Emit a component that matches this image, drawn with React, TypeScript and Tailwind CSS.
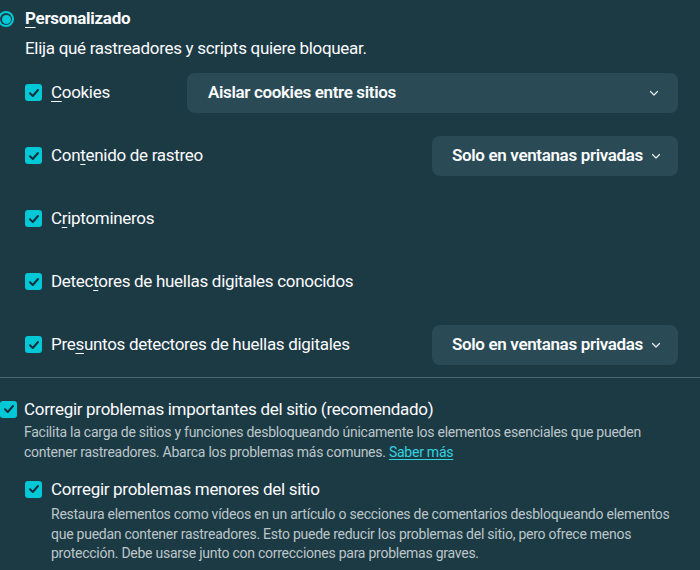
import React from "react";

const Check = ({ className = "" }: { className?: string }) => (
  <span className={`flex h-[17px] w-[17px] shrink-0 items-center justify-center rounded-[3px] bg-[#00c8d7] ${className}`}>
    <svg viewBox="0 0 16 16" className="h-4 w-4">
      <path d="M4 8.3 L6.8 11 L12 5" fill="none" stroke="#15303a" strokeWidth="2" strokeLinecap="round" strokeLinejoin="round" />
    </svg>
  </span>
);

const Chevron = () => (
  <svg viewBox="0 0 12 12" className="h-3 w-3 shrink-0">
    <path d="M2.5 4.5 L6 8 L9.5 4.5" fill="none" stroke="#e8eef0" strokeWidth="1.2" strokeLinecap="round" strokeLinejoin="round" />
  </svg>
);

const U = ({ children }: { children: React.ReactNode }) => (
  <span className="underline underline-offset-[3px] decoration-1">{children}</span>
);

const Select = ({ label, className = "" }: { label: string; className?: string }) => (
  <div
    className={`flex h-10 items-center rounded-[8px] bg-[#2a4b55] text-[17px] font-semibold tracking-[-0.35px] text-[#fbfbfe] ${className}`}
  >
    <span>{label}</span>
    <Chevron />
  </div>
);

const Row = ({ label, dropdown }: { label: React.ReactNode; dropdown?: React.ReactNode }) => (
  <div className="flex h-[63px] items-center">
    <Check />
    <span className="ml-[9px] text-[17px] tracking-[-0.3px]">{label}</span>
    <div className="ml-auto flex items-center">{dropdown}</div>
  </div>
);

const Private = () => <Select label="Solo en ventanas privadas" className="w-[246px] gap-[7px] pl-[20px]" />;

export default function App() {
  return (
    <div
      className="h-[570px] w-[700px] overflow-hidden bg-[#1c3a44] text-[#fbfbfe]"
      style={{ fontFamily: 'Roboto, "Noto Sans", sans-serif' }}
    >
      <div className="flex h-[38px] items-center">
        <span className="ml-[-2px] flex h-4 w-4 items-center justify-center rounded-full bg-[#00c8d7]">
          <span className="flex h-[12px] w-[12px] items-center justify-center rounded-full bg-[#1c3a44]">
            <span className="h-[9px] w-[9px] rounded-full bg-[#00c8d7]" />
          </span>
        </span>
        <span className="ml-[11px] text-[17px] font-bold tracking-[-0.3px]">
          <U>P</U>ersonalizado
        </span>
      </div>
      <div className="ml-[25px] text-[17px] leading-[20px] tracking-[-0.3px]">
        Elija qué rastreadores y scripts quiere bloquear.
      </div>
      <div className="ml-[25px] mr-[22px] mt-[3px]">
        <div className="flex h-[63px] items-center">
          <Check />
          <span className="ml-[9px] text-[17px] tracking-[-0.3px]">
            <U>C</U>ookies
          </span>
          <Select label="Aislar cookies entre sitios" className="ml-auto w-[491px] justify-between pl-[21px] pr-[18px]" />
        </div>
        <Row
          label={
            <>
              Con<U>t</U>enido de rastreo
            </>
          }
          dropdown={<Private />}
        />
        <Row
          label={
            <>
              C<U>r</U>iptomineros
            </>
          }
        />
        <Row
          label={
            <>
              Detec<U>t</U>ores de huellas digitales conocidos
            </>
          }
        />
        <Row
          label={
            <>
              Pre<U>s</U>untos detectores de huellas digitales
            </>
          }
          dropdown={<Private />}
        />
      </div>
      <div className="mt-[1px] h-px w-full bg-[#4d6770]" />
      <div className="mt-[21px] flex items-center">
        <Check />
        <span className="ml-[7px] text-[17px] leading-[20px] tracking-[-0.3px]">
          Corregir problemas importantes del sitio (recomendado)
        </span>
      </div>
      <div className="ml-[24px] mt-[3px] text-[14px] leading-[20px] tracking-[-0.25px] text-[#bcc6ca]">
        Facilita la carga de sitios y funciones desbloqueando únicamente los elementos esenciales que pueden
        <br />
        contener rastreadores. Abarca los problemas más comunes.{" "}
        <a className="text-[#33d4e0] underline underline-offset-2">Saber más</a>
      </div>
      <div className="ml-[25px] mt-[17px] flex items-center">
        <Check />
        <span className="ml-[9px] text-[17px] leading-[20px] tracking-[-0.3px]">Corregir problemas menores del sitio</span>
      </div>
      <div className="ml-[51px] mt-[6px] text-[14px] leading-[19.5px] tracking-[-0.25px] text-[#bcc6ca]">
        Restaura elementos como vídeos en un artículo o secciones de comentarios desbloqueando elementos
        <br />
        que puedan contener rastreadores. Esto puede reducir los problemas del sitio, pero ofrece menos
        <br />
        protección. Debe usarse junto con correcciones para problemas graves.
      </div>
    </div>
  );
}
